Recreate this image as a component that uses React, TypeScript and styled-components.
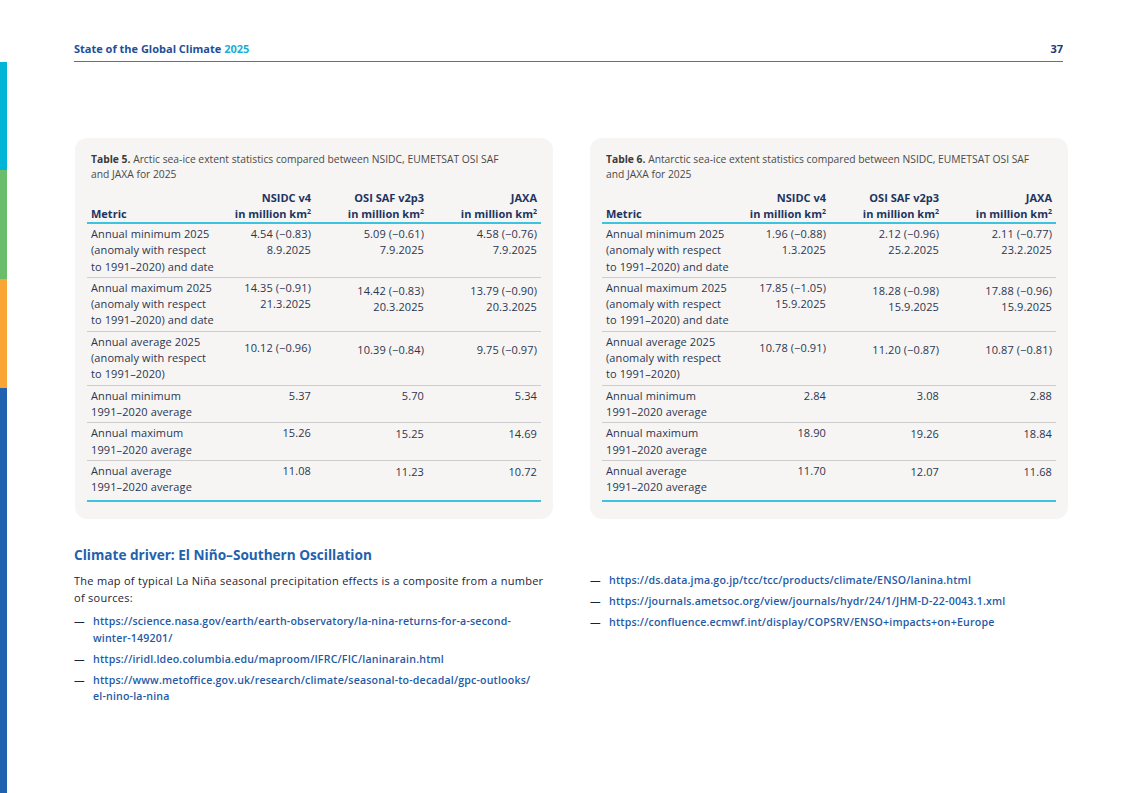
import React from "react";
import styled, { createGlobalStyle } from "styled-components";

const Global = createGlobalStyle`
  html, body { margin: 0; padding: 0; background: #ffffff; }
  body { font-family: "Open Sans", "Noto Sans", sans-serif; color: #1e2a44; }
  * { box-sizing: border-box; }
`;

const Page = styled.div`
  display: grid;
  grid-template-columns: 7px 1fr;
  width: 1121px;
  min-height: 793px;
  overflow: hidden;
`;

const Strip = styled.div`
  margin-top: 62px;
  display: flex;
  flex-direction: column;
`;

const StripSeg = styled.div<{ $c: string; $h?: number }>`
  background: ${(p) => p.$c};
  height: ${(p) => (p.$h ? `${p.$h}px` : "auto")};
  flex: ${(p) => (p.$h ? "0 0 auto" : "1 1 auto")};
`;

const Main = styled.div`
  padding: 0 58px 0 67px;
  display: flex;
  flex-direction: column;
`;

const Header = styled.header`
  margin-top: 42px;
  padding-bottom: 5px;
  display: flex;
  justify-content: space-between;
  align-items: center;
  border-bottom: 1px solid #4f6fb8;
  font-size: 11px;
  line-height: 14px;
  font-weight: 700;
  color: #1f4e99;
`;

const Accent = styled.span`
  color: #16b0d6;
`;

const PageNo = styled.span`
  color: #1c3a70;
`;

const Tables = styled.div`
  margin: 76px -5px 0 1px;
  display: grid;
  grid-template-columns: 478px 478px;
  gap: 37px;
`;

const Card = styled.section`
  background: #f6f5f3;
  border-radius: 12px;
  padding: 14px 12px 17px;
`;

const Caption = styled.p`
  margin: 0 0 8px;
  padding: 0 4px;
  font-size: 10.3px;
  line-height: 15px;
  color: #4a4a4a;
  white-space: nowrap;
  b { font-weight: 700; color: #3a3a3a; }
`;

const Table = styled.table`
  width: 100%;
  border-collapse: collapse;
  table-layout: fixed;
  border-bottom: 2px solid #3cc3e0;
`;

const Th = styled.th<{ $left?: boolean }>`
  text-align: ${(p) => (p.$left ? "left" : "right")};
  vertical-align: bottom;
  padding: 0 4px 0px;
  font-size: 11px;
  line-height: 16px;
  font-weight: 700;
  color: #1d3461;
  border-bottom: 2px solid #3cc3e0;
  sup { font-size: 7px; line-height: 0; vertical-align: 4px; }
`;

const Tr = styled.tr`
  & + & td { border-top: 1px solid #cdcdcd; }
  &:last-child td { padding-bottom: 5px; }
`;

const Td = styled.td<{ $left?: boolean; $dy?: number }>`
  text-align: ${(p) => (p.$left ? "left" : "right")};
  vertical-align: top;
  padding: ${(p) => 2 + (p.$dy || 0)}px 4px 2px;
  font-size: 11px;
  letter-spacing: 0.1px;
  line-height: 16.3px;
  color: #2b3552;
`;

const Section = styled.section`
  margin-top: 27px;
`;

const Title = styled.h2`
  margin: 0 0 9px;
  font-size: 13.6px;
  line-height: 17px;
  font-weight: 700;
  color: #2262ad;
`;

const Columns = styled.div`
  display: grid;
  grid-template-columns: 472px 1fr;
  gap: 44px;
`;

const Para = styled.p`
  margin: 0 0 7px;
  font-size: 11px;
  line-height: 17px;
  color: #1b2336;
  letter-spacing: 0.28px;
`;

const List = styled.ul`
  list-style: none;
  margin: 0;
  padding: 0;
  display: flex;
  flex-direction: column;
  gap: 4.5px;
`;

const Item = styled.li`
  display: grid;
  grid-template-columns: 19px 1fr;
  font-size: 10.6px;
  line-height: 16.5px;
`;

const Dash = styled.span`
  color: #1b2336;
`;

const Link = styled.a`
  color: #1f5aa6;
  font-weight: 600;
  text-decoration: none;
  white-space: nowrap;
  letter-spacing: 0.18px;
`;

type Row = { m: string[]; v: { t: string[]; dy?: number }[] };

const t5: Row[] = [
  {
    m: ["Annual minimum 2025", "(anomaly with respect", "to 1991–2020) and date"],
    v: [{ t: ["4.54 (−0.83)", "8.9.2025"] }, { t: ["5.09 (−0.61)", "7.9.2025"] }, { t: ["4.58 (−0.76)", "7.9.2025"] }],
  },
  {
    m: ["Annual maximum 2025", "(anomaly with respect", "to 1991–2020) and date"],
    v: [{ t: ["14.35 (−0.91)", "21.3.2025"] }, { t: ["14.42 (−0.83)", "20.3.2025"], dy: 3 }, { t: ["13.79 (−0.90)", "20.3.2025"], dy: 3 }],
  },
  {
    m: ["Annual average 2025", "(anomaly with respect", "to 1991–2020)"],
    v: [{ t: ["10.12 (−0.96)"], dy: 6 }, { t: ["10.39 (−0.84)"], dy: 8 }, { t: ["9.75 (−0.97)"], dy: 8 }],
  },
  { m: ["Annual minimum", "1991–2020 average"], v: [{ t: ["5.37"] }, { t: ["5.70"] }, { t: ["5.34"] }] },
  { m: ["Annual maximum", "1991–2020 average"], v: [{ t: ["15.26"] }, { t: ["15.25"], dy: 1 }, { t: ["14.69"], dy: 1 }] },
  { m: ["Annual average", "1991–2020 average"], v: [{ t: ["11.08"] }, { t: ["11.23"], dy: 1 }, { t: ["10.72"], dy: 1 }] },
];

const t6: Row[] = [
  {
    m: ["Annual minimum 2025", "(anomaly with respect", "to 1991–2020) and date"],
    v: [{ t: ["1.96 (−0.88)", "1.3.2025"] }, { t: ["2.12 (−0.96)", "25.2.2025"] }, { t: ["2.11 (−0.77)", "23.2.2025"] }],
  },
  {
    m: ["Annual maximum 2025", "(anomaly with respect", "to 1991–2020) and date"],
    v: [{ t: ["17.85 (−1.05)", "15.9.2025"] }, { t: ["18.28 (−0.98)", "15.9.2025"], dy: 3 }, { t: ["17.88 (−0.96)", "15.9.2025"], dy: 3 }],
  },
  {
    m: ["Annual average 2025", "(anomaly with respect", "to 1991–2020)"],
    v: [{ t: ["10.78 (−0.91)"], dy: 6 }, { t: ["11.20 (−0.87)"], dy: 8 }, { t: ["10.87 (−0.81)"], dy: 8 }],
  },
  { m: ["Annual minimum", "1991–2020 average"], v: [{ t: ["2.84"] }, { t: ["3.08"] }, { t: ["2.88"] }] },
  { m: ["Annual maximum", "1991–2020 average"], v: [{ t: ["18.90"] }, { t: ["19.26"], dy: 1 }, { t: ["18.84"], dy: 1 }] },
  { m: ["Annual average", "1991–2020 average"], v: [{ t: ["11.70"] }, { t: ["12.07"], dy: 1 }, { t: ["11.68"], dy: 1 }] },
];

const Lines = ({ l }: { l: string[] }) => (
  <>
    {l.map((s, i) => (
      <React.Fragment key={i}>
        {i > 0 && <br />}
        {s}
      </React.Fragment>
    ))}
  </>
);

const Km = () => (
  <>
    in million km<sup>2</sup>
  </>
);

const DataTable = ({ num, label, rows }: { num: string; label: string; rows: Row[] }) => (
  <Card>
    <Caption>
      <b>Table {num}.</b> {label} sea-ice extent statistics compared between NSIDC, EUMETSAT OSI SAF
      <br />
      and JAXA for 2025
    </Caption>
    <Table>
      <colgroup>
        <col style={{ width: 138 }} />
        <col style={{ width: 90 }} />
        <col style={{ width: 113 }} />
        <col style={{ width: 113 }} />
      </colgroup>
      <thead>
        <tr>
          <Th $left>Metric</Th>
          <Th>
            NSIDC v4
            <br />
            <Km />
          </Th>
          <Th>
            OSI SAF v2p3
            <br />
            <Km />
          </Th>
          <Th>
            JAXA
            <br />
            <Km />
          </Th>
        </tr>
      </thead>
      <tbody>
        {rows.map((r, i) => (
          <Tr key={i}>
            <Td $left>
              <Lines l={r.m} />
            </Td>
            {r.v.map((c, j) => (
              <Td key={j} $dy={c.dy}>
                <Lines l={c.t} />
              </Td>
            ))}
          </Tr>
        ))}
      </tbody>
    </Table>
  </Card>
);

const LinkItem = ({ lines }: { lines: string[] }) => (
  <Item>
    <Dash>—</Dash>
    <Link href="#">
      <Lines l={lines} />
    </Link>
  </Item>
);

export default function App() {
  return (
    <>
      <Global />
      <Page>
        <Strip>
          <StripSeg $c="#00b5d6" $h={108} />
          <StripSeg $c="#6abd6a" $h={109} />
          <StripSeg $c="#f9a634" $h={109} />
          <StripSeg $c="#2062b0" />
        </Strip>
        <Main>
          <Header>
            <span>
              State of the Global Climate <Accent>2025</Accent>
            </span>
            <PageNo>37</PageNo>
          </Header>
          <Tables>
            <DataTable num="5" label="Arctic" rows={t5} />
            <DataTable num="6" label="Antarctic" rows={t6} />
          </Tables>
          <Section>
            <Title>Climate driver: El Niño–Southern Oscillation</Title>
            <Columns>
              <div>
                <Para>
                  The map of typical La Niña seasonal precipitation effects is a composite from a number
                  <br />
                  of sources:
                </Para>
                <List>
                  <LinkItem
                    lines={[
                      "https://science.nasa.gov/earth/earth-observatory/la-nina-returns-for-a-second-",
                      "winter-149201/",
                    ]}
                  />
                  <LinkItem lines={["https://iridl.ldeo.columbia.edu/maproom/IFRC/FIC/laninarain.html"]} />
                  <LinkItem
                    lines={[
                      "https://www.metoffice.gov.uk/research/climate/seasonal-to-decadal/gpc-outlooks/",
                      "el-nino-la-nina",
                    ]}
                  />
                </List>
              </div>
              <List>
                <LinkItem lines={["https://ds.data.jma.go.jp/tcc/tcc/products/climate/ENSO/lanina.html"]} />
                <LinkItem lines={["https://journals.ametsoc.org/view/journals/hydr/24/1/JHM-D-22-0043.1.xml"]} />
                <LinkItem lines={["https://confluence.ecmwf.int/display/COPSRV/ENSO+impacts+on+Europe"]} />
              </List>
            </Columns>
          </Section>
        </Main>
      </Page>
    </>
  );
}
